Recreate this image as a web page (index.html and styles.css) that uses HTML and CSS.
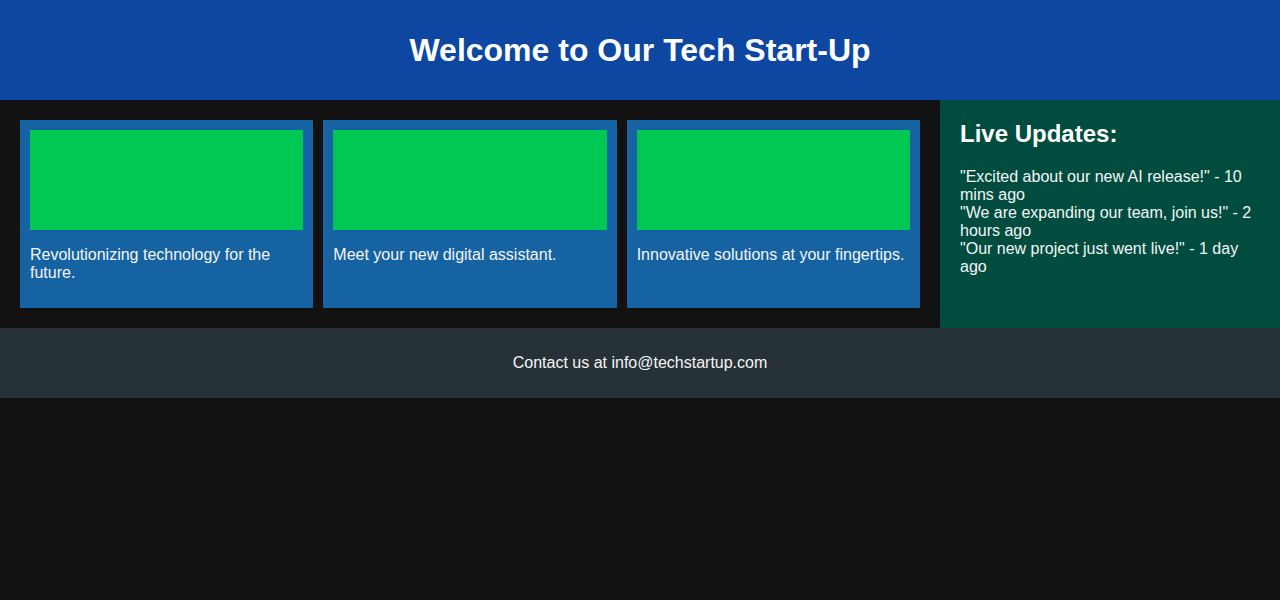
FILE: index.html
```html
<!DOCTYPE html>
<html lang="en">
<head>
<meta charset="utf-8">
<title>Tech Start-Up</title>
<link rel="stylesheet" href="styles.css">
</head>
<body>
<header class="header">
  <h1 class="title">Welcome to Our Tech Start-Up</h1>
</header>
<main class="main">
  <section class="cards">
    <div class="card">
      <div class="card-img"></div>
      <p class="card-text">Revolutionizing technology for the future.</p>
    </div>
    <div class="card">
      <div class="card-img"></div>
      <p class="card-text">Meet your new digital assistant.</p>
    </div>
    <div class="card">
      <div class="card-img"></div>
      <p class="card-text">Innovative solutions at your fingertips.</p>
    </div>
  </section>
  <aside class="sidebar">
    <h2 class="side-title">Live Updates:</h2>
    <div class="update">"Excited about our new AI release!" - 10 mins ago</div>
    <div class="update">"We are expanding our team, join us!" - 2 hours ago</div>
    <div class="update">"Our new project just went live!" - 1 day ago</div>
  </aside>
</main>
<footer class="footer">Contact us at info@techstartup.com</footer>
</body>
</html>
```
FILE: styles.css
```css
html, body {
  margin: 0;
  padding: 0;
  background: #121212;
  color: #f5f5f5;
  font-family: "Liberation Sans", Arial, sans-serif;
  font-size: 16px;
  line-height: 18px;
}
.header {
  background: #0d47a1;
  height: 100px;
  display: flex;
  align-items: center;
  justify-content: center;
}
.title {
  margin: 0;
  color: #ffffff;
  font-size: 32px;
  line-height: 37px;
  font-weight: bold;
}
.main {
  display: flex;
}
.cards {
  width: 940px;
  box-sizing: border-box;
  padding: 20px;
  display: flex;
  gap: 10px;
}
.card {
  flex: 1;
  background: #1563a2;
  padding: 10px;
  height: 188px;
  box-sizing: border-box;
}
.card-img {
  height: 100px;
  background: #00c853;
}
.card-text {
  margin: 16px 0 0;
}
.sidebar {
  flex: 1;
  background: #004d40;
  padding: 20px;
}
.side-title {
  margin: 0 0 20px;
  color: #ffffff;
  font-size: 24px;
  line-height: 28px;
  font-weight: bold;
}
.footer {
  background: #263238;
  height: 70px;
  display: flex;
  align-items: center;
  justify-content: center;
}
```
